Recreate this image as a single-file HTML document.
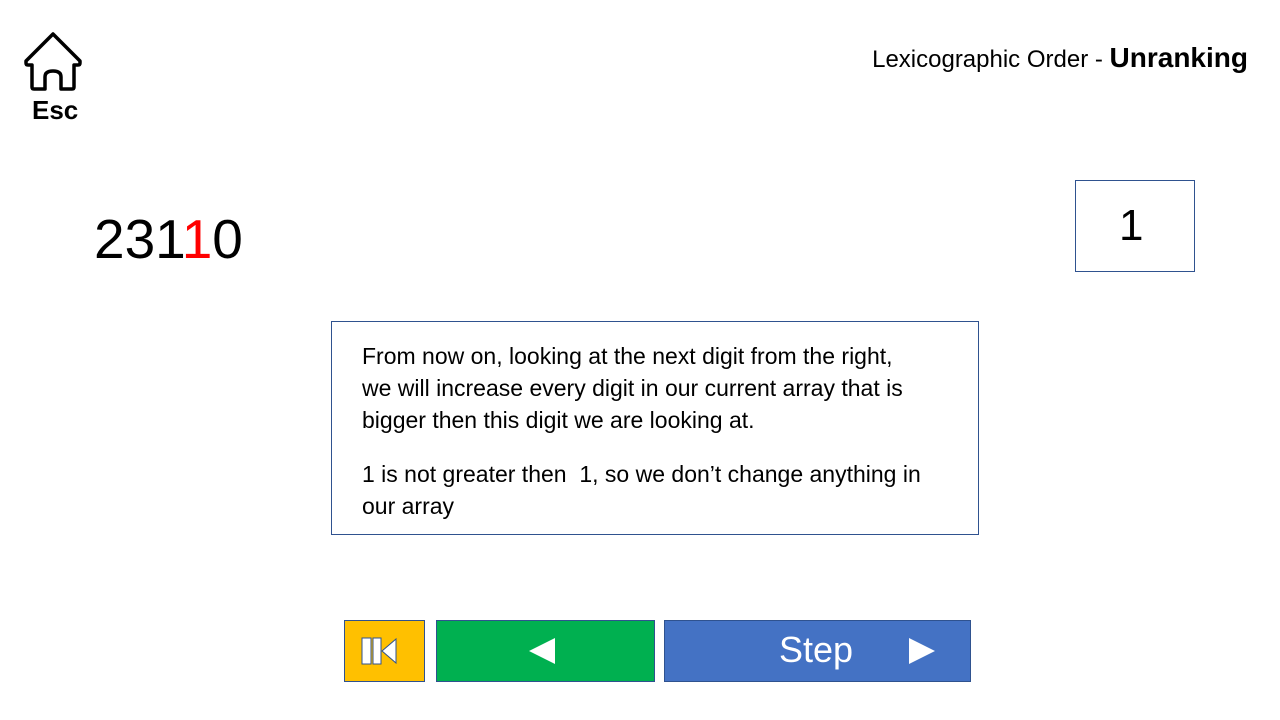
<!DOCTYPE html>
<html><head><style>
body{margin:0;width:1280px;height:720px;background:#fff;position:relative;font-family:"Liberation Sans",sans-serif;overflow:hidden}
.a{position:absolute}
</style></head><body>
<svg class="a" style="left:22px;top:31px" width="62" height="60" viewBox="0 0 62 60">
<path d="M31 3 L4 30 L4 32 Q4 34 6 34 L10 34 L10 56 Q10 58 12 58 L23 58 L23 46 Q23 40 31 40 Q39 40 39 46 L39 58 L50 58 Q52 58 52 56 L52 34 L56 34 Q58 34 58 32 L58 30 Z" fill="none" stroke="#000" stroke-width="3.5" stroke-linejoin="round"/>
</svg>
<div class="a" style="left:32px;top:95px;font-size:26px;font-weight:bold">Esc</div>
<div class="a" style="right:32px;top:42px;font-size:24px">Lexicographic Order - <b style="font-size:28px">Unranking</b></div>
<div class="a" style="left:94px;top:207px;font-size:55px">231<span style="color:#f00">1</span>0</div>
<div class="a" style="left:1075px;top:180px;width:118px;height:90px;border:1px solid #2f528f;font-size:44px;line-height:90px"><span style="position:absolute;left:43px">1</span></div>
<div class="a" style="left:331px;top:321px;width:648px;height:214px;border:1px solid #2f528f;box-sizing:border-box;padding:18px 0 0 30px;font-size:23px;line-height:32px">
<div style="width:560px">From now on, looking at the next digit from the right, we will increase every digit in our current array that is bigger then this digit we are looking at.</div>
<div style="margin-top:22px;width:580px">1 is not greater then&nbsp; 1, so we don’t change anything in our array</div>
</div>
<div class="a" style="left:344px;top:620px;width:81px;height:62px;background:#ffc000;border:1px solid #2f528f;box-sizing:border-box">
<svg width="80" height="61"><g fill="#fff" stroke="#2f528f" stroke-width="1"><rect x="17" y="17" width="9" height="26"/><rect x="28" y="17" width="8" height="26"/><path d="M37 30 L51 18 L51 42 Z"/></g></svg></div>
<div class="a" style="left:436px;top:620px;width:219px;height:62px;background:#00b050;border:1px solid #2f528f;box-sizing:border-box">
<svg width="218" height="61"><path d="M92 30 L118 17 L118 43 Z" fill="#fff"/></svg></div>
<div class="a" style="left:664px;top:620px;width:307px;height:62px;background:#4472c4;border:1px solid #2f528f;box-sizing:border-box">
<span class="a" style="left:114px;top:8px;color:#fff;font-size:36px">Step</span>
<svg class="a" style="left:0;top:0" width="306" height="61"><path d="M244 17 L270 30 L244 43 Z" fill="#fff"/></svg></div>
</body></html>
